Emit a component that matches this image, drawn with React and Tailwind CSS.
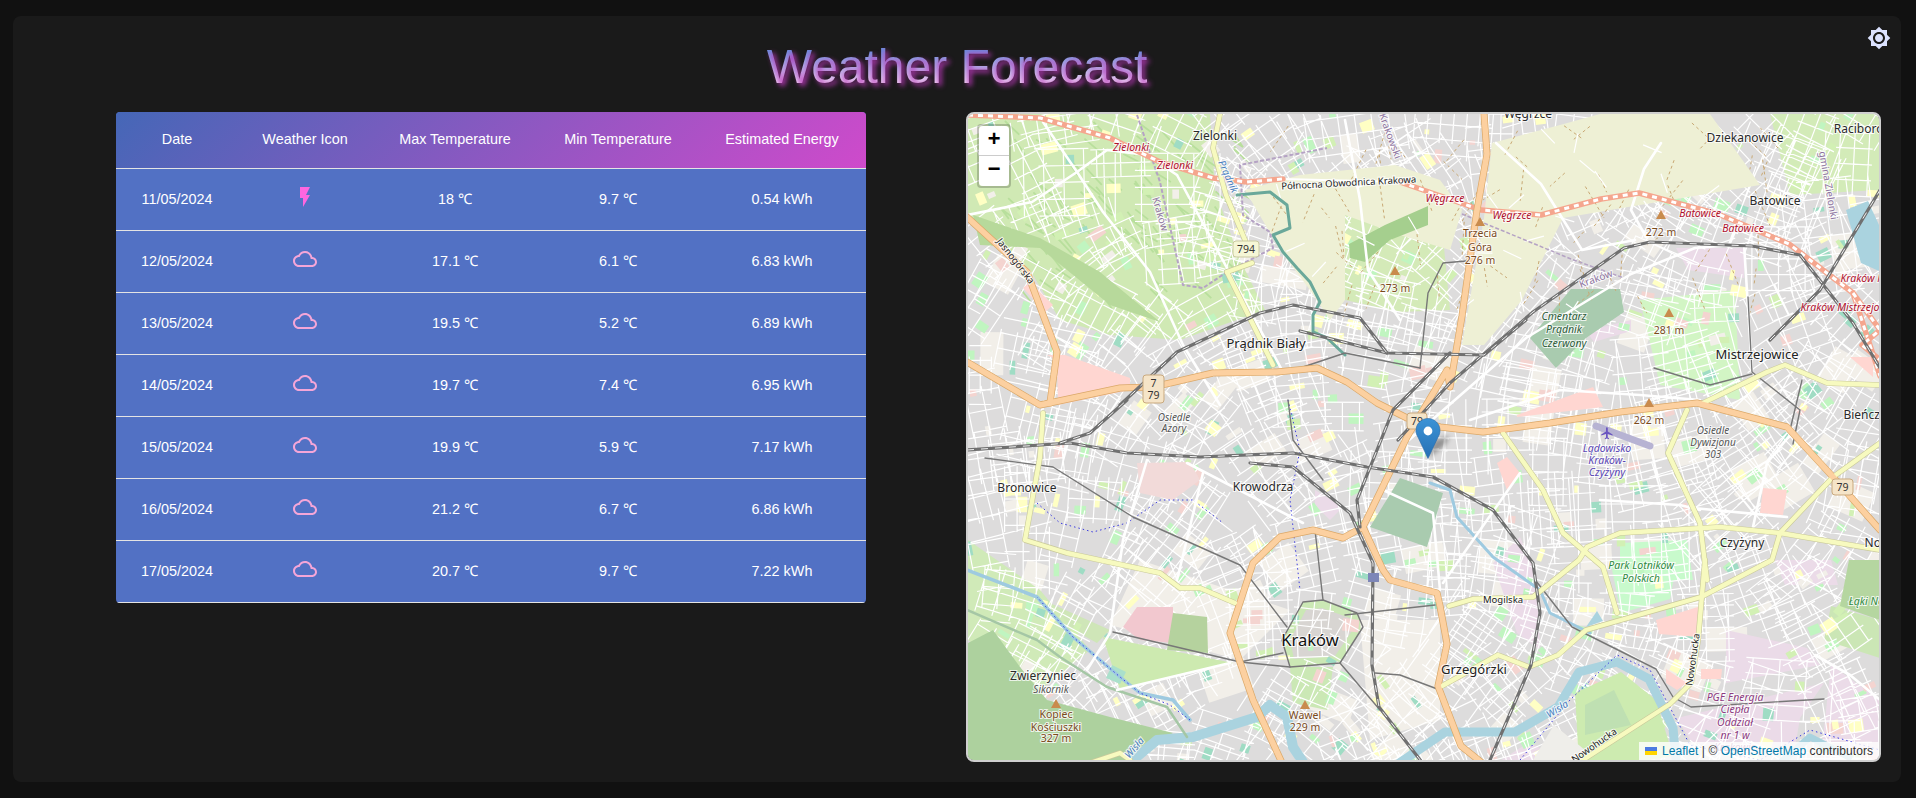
import React from "react";

const rows = [
  ["11/05/2024", "bolt", "18 ℃", "9.7 ℃", "0.54 kWh"],
  ["12/05/2024", "cloud", "17.1 ℃", "6.1 ℃", "6.83 kWh"],
  ["13/05/2024", "cloud", "19.5 ℃", "5.2 ℃", "6.89 kWh"],
  ["14/05/2024", "cloud", "19.7 ℃", "7.4 ℃", "6.95 kWh"],
  ["15/05/2024", "cloud", "19.9 ℃", "5.9 ℃", "7.17 kWh"],
  ["16/05/2024", "cloud", "21.2 ℃", "6.7 ℃", "6.86 kWh"],
  ["17/05/2024", "cloud", "20.7 ℃", "9.7 ℃", "7.22 kWh"],
];

function WeatherIcon({ type }) {
  if (type === "bolt") {
    return (
      <svg viewBox="0 0 24 24" className="inline-block w-6 h-6 align-middle fill-[#ff66e0]">
        <path d="M7 2v11h3v9l7-12h-4l4-8z" />
      </svg>
    );
  }
  return (
    <svg viewBox="0 0 24 24" className="inline-block w-6 h-6 align-middle fill-[#f5a6d8]">
      <path d="M12 6c2.62 0 4.88 1.86 5.39 4.43l.3 1.5 1.53.11c1.56.1 2.78 1.41 2.78 2.96 0 1.65-1.35 3-3 3H6c-2.21 0-4-1.79-4-4 0-2.05 1.53-3.76 3.56-3.97l1.07-.11.5-.95C8.08 7.14 9.94 6 12 6m0-2C9.11 4 6.6 5.64 5.35 8.04 2.34 8.36 0 10.91 0 14c0 3.31 2.69 6 6 6h13c2.76 0 5-2.24 5-5 0-2.64-2.05-4.78-4.65-4.96C18.67 6.59 15.64 4 12 4z" />
    </svg>
  );
}

// map data, all in page pixels (the svg viewBox starts at the map's corner)
// these lie under the street mesh
const softAreas = [
  ["#d0e9b4", "968,114 1210,114 1215,190 1240,260 1265,310 1180,340 1110,335 1060,320 1030,270 968,215"],
  ["#d4eab8", "1345,195 1440,205 1450,310 1400,312 1345,300"],
  ["#d3ebb8", "1770,114 1880,114 1880,190 1790,195"],
  ["#ebdbe8", "1676,248 1744,248 1744,278 1688,270"],
  ["#ebdbe8", "1586,331 1631,320 1631,331 1594,342"],
  ["#ebdbe8", "1493,563 1520,537 1537,577 1540,650 1517,633"],
  ["#ebdbe8", "1677,718 1824,683 1800,718 1796,742 1747,753 1691,742"],
  ["#ebdbe8", "1726,630 1807,648 1820,665 1726,683"],
  ["#ebdbe8", "1831,665 1880,700 1880,765 1820,765"],
  ["#ebdbe8", "1494,765 1529,742 1568,765"],
  ["#ebdbe8", "1775,560 1831,560 1838,585 1785,585"],
  ["#ebdbe8", "1315,490 1343,507 1330,520 1315,505"],
  ["#c8facc", "1610,560 1677,560 1670,599 1621,613"],
  ["#c8facc", "1620,543 1687,540 1693,580 1620,580"],
  ["#d2f5c4", "1640,300 1735,290 1740,400 1660,385"],
  ["#cfe6b8", "1043,600 1110,630 1097,643 1050,617"],
  ["#cbe8b5", "1290,667 1333,667 1327,710 1293,703"],
  ["#cbe8b5", "1303,602 1323,600 1357,613 1363,627 1340,663 1290,667 1282,640"],
  ["#d8d5d2", "1306,610 1322,608 1350,618 1354,628 1335,656 1294,659 1290,640"],
  ["#cbe6b5", "1831,606 1880,620 1880,658 1824,640"],
  ["#d0eab8", "968,540 1040,590 1090,650 1040,690 968,640"],
  ["#f2efe9", "1140,560 1290,610 1240,660 1110,625"],
  ["#f2efe9", "1360,620 1440,620 1440,720 1370,740"],
];

// these cover the mesh
const solidAreas = [
  ["#b7d99b", "973,215 1040,238 1100,272 1160,322 1110,305 1040,248 980,245"],
  ["#eef0d5", "1245,190 1300,175 1395,165 1440,180 1462,210 1450,250 1400,235 1345,215 1345,300 1330,320 1310,290 1280,250"],
  ["#eef0d5", "1492,143 1560,125 1600,114 1710,114 1760,185 1700,195 1640,205 1563,218 1522,300 1484,345 1462,345 1484,218"],
  ["#a5cf8e", "1349,244 1385,225 1428,206 1428,225 1390,240 1365,262 1350,258"],
  ["#a9cbaf", "1370,527 1400,478 1443,493 1427,547"],
  ["#a9cbaf", "1530,338 1571,289 1620,289 1624,312 1586,338 1556,368"],
  ["#ffd6d1", "1047,355 1065,355 1130,378 1130,390 1058,405 1057,360"],
  ["#ffd6d1", "1030,282 1053,305 1045,312 1023,288"],
  ["#f2dad9", "1137,463 1190,462 1200,480 1173,500 1140,493"],
  ["#f2c8cf", "1123,627 1137,607 1173,607 1173,643 1140,640"],
  ["#ffd6d1", "1497,463 1507,457 1520,473 1507,490"],
  ["#ffd6d1", "1517,415 1593,387 1603,407 1517,417"],
  ["#ffd6d1", "1656,620 1701,606 1698,637 1659,634"],
  ["#ffd6d1", "1701,669 1722,669 1721,679 1701,679"],
  ["#ffd6d1", "1666,669 1687,683 1677,690 1666,683"],
  ["#ffd6d1", "1763,488 1787,490 1783,515 1760,513"],
  ["#ffd6d1", "1850,357 1873,357 1873,377"],
  ["#cdeab0", "1103,637 1233,663 1120,690"],
  ["#b5d29e", "1173,613 1207,617 1208,653 1167,650"],
  ["#add19e", "968,643 993,630 1020,667 1047,700 1110,717 1173,733 1127,760 968,760"],
  ["#cdebb0", "1575,693 1621,672 1656,700 1673,756 1621,765 1579,765"],
  ["#bfe0b2", "1585,705 1614,690 1631,725 1585,735"],
  ["#efeeea", "1554,725 1585,750 1567,765 1530,765"],
  ["#b5d6a0", "1849,560 1880,560 1880,620 1840,606"],
  ["#aad3df", "1846,210 1868,201 1879,225 1879,271 1861,263"],
  ["#aad3df", "1597,611 1603,621 1586,627"],
  ["#aae0cb", "1112,665 1126,672 1120,684 1106,678"],
];

const whiteWays = [
  "967,215 1032,202 1077,172 1107,150 1147,155 1177,175",
  "1043,122 1077,172 1103,212 1150,272 1183,345 1220,405",
  "1177,175 1227,268 1283,372",
  "1496,143 1541,184 1582,250 1635,240",
  "1661,143 1644,169 1631,210 1646,237",
  "1409,440 1526,338 1631,274 1695,248 1744,244",
  "1693,508 1787,517",
  "1753,527 1767,463 1790,435",
  "1383,490 1433,513 1440,590",
  "1443,583 1520,473",
  "1117,690 1230,663",
  "1087,670 1110,633 1123,540 1147,460",
  "1203,473 1177,580",
  "1187,463 1303,523",
  "1345,120 1360,200 1368,270 1400,320",
  "1470,420 1560,390 1640,395 1700,400",
  "1744,244 1752,370",
  "1815,655 1850,675 1880,700",
  "1600,500 1680,505 1700,510",
];

const grayWays = [
  "1748,297 1752,372 1800,410 1793,444",
  "1420,368 1428,293 1443,263 1466,261",
  "1300,368 1345,353 1420,368",
  "1654,368 1710,385 1752,374",
  "1802,380 1790,430",
  "1536,581 1572,627 1614,648 1656,669 1673,697 1691,707 1824,699",
  "985,458 1053,467 1133,517 1240,565 1287,627",
  "1288,400 1293,440 1323,480",
  "1303,602 1323,600 1357,613 1363,627 1340,663 1290,667 1282,640 1303,602",
  "1113,632 1240,662 1283,653",
  "1340,663 1380,710",
  "1323,600 1315,530",
  "1290,667 1240,662",
  "1375,673 1400,675 1440,690",
  "1345,615 1435,605",
];

const orangeWays = [
  "967,217 1027,272 1057,352 1050,403",
  "967,362 1040,405 1120,388 1153,387 1213,373 1277,372 1317,368 1347,382 1377,403 1407,418 1440,427 1483,432 1550,423 1620,412 1697,403 1787,427 1833,477 1880,530",
  "1484,114 1487,154 1477,210 1462,316 1450,387 1447,370 1407,437 1363,527 1343,538 1313,530 1280,537 1253,563 1230,633 1253,700 1283,765",
  "1363,527 1383,570 1390,580 1437,593 1440,606 1447,644 1438,686 1461,746 1491,770",
];

const yellowWays = [
  "1220,114 1213,148 1226,195 1245,240",
  "1227,272 1273,365",
  "1227,272 1252,263",
  "1043,413 1040,457 1025,540 1067,553 1160,573 1180,588 1200,588 1235,603",
  "1503,433 1543,490 1563,533 1603,567 1617,613",
  "1449,606 1473,599 1533,597 1579,560 1587,547 1620,533 1720,527 1780,533 1880,550",
  "1442,686 1498,655 1529,667 1558,655 1586,630 1701,597 1772,560 1780,533 1833,477 1880,443",
  "1705,560 1698,641 1691,683 1670,704 1572,767",
  "1687,410 1668,453 1700,523 1707,580",
  "1703,403 1767,372 1785,365 1827,383 1880,385",
  "1093,762 1120,753 1130,760",
];

const rails = [
  "967,450 1070,443 1127,453 1200,457 1293,453 1367,467 1433,477 1493,510 1533,563 1540,613 1531,665 1487,767",
  "1250,463 1293,467 1350,513 1373,563 1372,665 1379,707 1428,770",
  "1398,440 1450,383 1533,312 1624,248 1650,242 1752,246 1800,255 1853,323 1880,368",
  "1450,353 1393,410 1357,500 1360,527",
  "1300,331 1387,353 1484,355 1526,320",
  "1120,405 1177,352 1260,313 1293,305 1360,318 1387,353",
  "1060,443 1090,433 1127,400",
  "1770,340 1820,290 1880,190",
];

const labels = [
  ["Zielonki", 1215, 140, "town"],
  ["Zielonki", 1131, 151, "red"],
  ["Zielonki", 1175, 169, "red"],
  ["Północna Obwodnica Krakowa", 1349, 186, "road", -3],
  ["Prądnik", 1225, 178, "river", 66],
  ["Kraków", 1157, 215, "admin", 74],
  ["Jasnogórska", 1013, 263, "road", 52],
  ["Prądnik Biały", 1266, 348, "big"],
  ["Węgrzce", 1528, 118, "town"],
  ["Dziekanowice", 1745, 142, "town"],
  ["Raciborowice", 1871, 133, "town"],
  ["Batowice", 1775, 205, "town"],
  ["Batowice", 1700, 217, "red"],
  ["Batowice", 1743, 232, "red"],
  ["Węgrzce", 1445, 202, "red"],
  ["Węgrzce", 1512, 219, "red"],
  ["Trzecia", 1480, 237, "peak"],
  ["Góra", 1480, 251, "peak"],
  ["276 m", 1480, 264, "peak"],
  ["273 m", 1395, 292, "peak"],
  ["272 m", 1661, 236, "peak"],
  ["281 m", 1669, 334, "peak"],
  ["262 m", 1649, 424, "peak"],
  ["Cmentarz", 1564, 320, "cemetery"],
  ["Prądnik", 1564, 333, "cemetery"],
  ["Czerwony", 1564, 347, "cemetery"],
  ["Kraków", 1597, 282, "admin", -20],
  ["gmina Zielonki", 1825, 186, "admin", 80],
  ["Krakowski", 1387, 137, "admin", 70],
  ["Kraków Mistrzejowice", 1890, 282, "red"],
  ["Kraków Mistrzejowice", 1850, 311, "red"],
  ["Mistrzejowice", 1757, 359, "big"],
  ["Osiedle", 1174, 421, "gray"],
  ["Azory", 1174, 432, "gray"],
  ["Bronowice", 1027, 492, "town"],
  ["Krowodrza", 1263, 491, "town"],
  ["Kraków", 1310, 646, "city"],
  ["Zwierzyniec", 1043, 680, "town"],
  ["Sikornik", 1051, 693, "gray"],
  ["Kopiec", 1056, 718, "peak"],
  ["Kościuszki", 1056, 731, "peak"],
  ["327 m", 1056, 742, "peak"],
  ["Wawel", 1305, 719, "peak"],
  ["229 m", 1305, 731, "peak"],
  ["Lądowisko", 1607, 452, "air"],
  ["Kraków-", 1607, 464, "air"],
  ["Czyżyny", 1607, 476, "air"],
  ["Osiedle", 1713, 434, "gray"],
  ["Dywizjonu", 1713, 446, "gray"],
  ["303", 1713, 458, "gray"],
  ["Bieńczyce", 1871, 419, "town"],
  ["Czyżyny", 1742, 547, "town"],
  ["Nowa Huta", 1896, 547, "town"],
  ["Park Lotników", 1641, 569, "park"],
  ["Polskich", 1641, 582, "park"],
  ["Mogilska", 1503, 603, "road"],
  ["Grzegórzki", 1474, 674, "big"],
  ["Wisła", 1559, 712, "river", -32],
  ["Wisła", 1137, 750, "river", -50],
  ["Nowohucka", 1696, 660, "road", -82],
  ["Nowohucka", 1596, 748, "road", -35],
  ["Łąki Nowohuckie", 1888, 605, "park"],
  ["PGE Energia", 1735, 701, "plant"],
  ["Ciepła", 1735, 713, "plant"],
  ["Oddział", 1735, 726, "plant"],
  ["nr 1 w", 1735, 739, "plant"],
  ["Krakowie", 1735, 751, "plant"],
];

const labelStyle = {
  town: { fontSize: 12, fill: "#2a2a2a" },
  big: { fontSize: 13, fill: "#222" },
  city: { fontSize: 16.5, fill: "#111" },
  red: { fontSize: 10.5, fill: "#b0102e", fontStyle: "italic" },
  road: { fontSize: 9.5, fill: "#222" },
  river: { fontSize: 10, fill: "#4a7fc0", fontStyle: "italic" },
  admin: { fontSize: 10, fill: "#8d739f" },
  peak: { fontSize: 10.5, fill: "#7a4a1c" },
  cemetery: { fontSize: 10.5, fill: "#2d5c3a", fontStyle: "italic" },
  gray: { fontSize: 10, fill: "#555", fontStyle: "italic" },
  air: { fontSize: 10.5, fill: "#5a46b4", fontStyle: "italic" },
  park: { fontSize: 10.5, fill: "#2f8a3f", fontStyle: "italic" },
  plant: { fontSize: 10.5, fill: "#8c3b80", fontStyle: "italic" },
};

const peaks = [
  [1480, 222], [1395, 271], [1661, 215], [1669, 313], [1649, 403], [1056, 704], [1305, 705],
];

const shields = [
  [1233, 241, 26, 16, ["794"], "#f5f6d6", "#c9c9a0"],
  [1143, 375, 21, 28, ["7", "79"], "#f5e4c8", "#c9a97e"],
  [1407, 413, 20, 16, ["79"], "#f5e4c8", "#c9a97e"],
  [1832, 479, 21, 16, ["79"], "#f5e4c8", "#c9a97e"],
];

// seeded so the street mesh is the same on every render
function buildMesh() {
  let seed = 11;
  const rnd = () => {
    seed = (seed * 16807) % 2147483647;
    return seed / 2147483647;
  };
  const n = (v) => v.toFixed(1);
  let streets = "";
  const parcels = [];
  const beige = [];
  const tints = ["#ffffc4", "#ffffc4", "#c0f5c0", "#c0f5c0", "#d2f0b4", "#9fdcc4", "#f2efe9", "#f4d4d0"];

  // neighbourhoods: small rotated street grids
  for (let ax = 968; ax < 1880; ax += 46) {
    for (let ay = 114; ay < 762; ay += 46) {
      const cx = ax + rnd() * 36;
      const cy = ay + rnd() * 36;
      const a = Math.sin(cx / 190) * 0.9 + Math.cos(cy / 150) * 0.9 + (rnd() - 0.5) * 0.5;
      const ux = Math.cos(a), uy = Math.sin(a);
      const vx = -uy, vy = ux;
      const gap = 11 + rnd() * 8;
      const long = 18 + rnd() * 18;
      const count = 1 + Math.floor(rnd() * 2.5);
      for (let i = -count; i <= count; i++) {
        const ox = cx + vx * i * gap, oy = cy + vy * i * gap;
        streets += `M${n(ox - ux * long)} ${n(oy - uy * long)}L${n(ox + ux * long)} ${n(oy + uy * long)}`;
      }
      const cross = 1 + Math.floor(rnd() * 2);
      for (let i = -cross; i <= cross; i++) {
        const ox = cx + ux * i * long * 0.8, oy = cy + uy * i * long * 0.8;
        const h = count * gap;
        streets += `M${n(ox - vx * h)} ${n(oy - vy * h)}L${n(ox + vx * h)} ${n(oy + vy * h)}`;
      }
      if (rnd() < 0.3) {
        beige.push({ x: cx, y: cy, w: 22 + rnd() * 26, h: 16 + rnd() * 22, r: (a * 180) / Math.PI });
      }
      for (let k = 0; k < 3; k++) {
        if (rnd() < 0.75) {
          parcels.push({
            x: cx + (rnd() - 0.5) * 60,
            y: cy + (rnd() - 0.5) * 60,
            w: 4 + rnd() * 13,
            h: 4 + rnd() * 9,
            c: tints[Math.floor(rnd() * tints.length)],
            r: (a * 180) / Math.PI,
          });
        }
      }
    }
  }

  let strips = "";
  for (let i = 0; i < 110; i++) {
    const px = 1000 + rnd() * 240;
    const py = 118 + rnd() * 180;
    strips += `M${n(px)} ${n(py)}l${n(8 + rnd() * 12)} ${n(9 + rnd() * 8)}`;
  }
  let tracks = "";
  for (let i = 0; i < 70; i++) {
    const px = 1270 + rnd() * 500;
    const py = 120 + rnd() * 180;
    tracks += `M${n(px)} ${n(py)}l${n(rnd() * 40 - 20)} ${n(10 + rnd() * 25)}`;
  }
  let lanes = "";
  for (let i = 0; i < 45; i++) {
    const px = 1270 + rnd() * 470;
    const py = 118 + rnd() * 190;
    const a = rnd() * 3;
    lanes += `M${n(px)} ${n(py)}l${n(Math.cos(a) * 20)} ${n(Math.sin(a) * 20)}`;
  }
  return { streets, parcels, beige, strips, tracks, lanes };
}
const mesh = buildMesh();

function Line({ points, color, width, dash, opacity }) {
  return (
    <polyline
      points={points}
      fill="none"
      stroke={color}
      strokeWidth={width}
      strokeDasharray={dash}
      strokeOpacity={opacity}
      strokeLinejoin="round"
      strokeLinecap={dash ? "butt" : "round"}
    />
  );
}

function MapDrawing() {
  return (
    <svg viewBox="968 114 911 646" className="block w-full h-full font-['Noto_Sans',sans-serif]">
      <defs>
        <linearGradient id="pin" x1="0" y1="0" x2="0" y2="1">
          <stop offset="0" stopColor="#3c93d6" />
          <stop offset="1" stopColor="#2670b4" />
        </linearGradient>
        <filter id="pinShadow"><feGaussianBlur stdDeviation="2.5" /></filter>
      </defs>
      <rect x="968" y="114" width="911" height="646" fill="#dddcdc" />
      {mesh.beige.map((p, i) => (
        <rect key={i} x={p.x} y={p.y} width={p.w} height={p.h} fill="#f2efe9" transform={`rotate(${p.r} ${p.x} ${p.y})`} />
      ))}
      {softAreas.map(([fill, points], i) => (
        <polygon key={i} points={points} fill={fill} />
      ))}
      <path d={mesh.strips} stroke="#b8df9c" strokeWidth="1.8" fill="none" />
      {mesh.parcels.map((p, i) => (
        <rect key={i} x={p.x} y={p.y} width={p.w} height={p.h} fill={p.c} transform={`rotate(${p.r} ${p.x} ${p.y})`} />
      ))}
      <path d={mesh.streets} stroke="#fff" strokeWidth="1.2" fill="none" />
      {solidAreas.map(([fill, points], i) => (
        <polygon key={i} points={points} fill={fill} />
      ))}
      <path d={mesh.tracks} stroke="#c8a874" strokeWidth="1" strokeDasharray="3 3" fill="none" />
      <path d={mesh.lanes} stroke="#fff" strokeWidth="1.2" fill="none" />

      {/* rivers */}
      <Line points="1133,760 1157,740 1193,737 1257,717 1270,705 1287,717 1293,747 1303,762" color="#aad3df" width="10" />
      <Line points="1389,770 1445,732 1515,732 1558,707 1579,672 1617,662 1649,679 1673,728 1677,770" color="#aad3df" width="9" />
      <Line points="1772,770 1810,737 1849,757" color="#aad3df" width="7" />
      <Line points="967,570 1037,597 1073,637 1120,677 1140,693 1173,700 1190,720" color="#9ecae0" width="3.5" />
      <Line points="967,610 1037,640 1060,657 1107,687 1167,707 1187,737" color="#a5c7a5" width="2.5" />
      <Line points="1237,195 1270,192 1287,205 1290,228 1273,235 1283,252 1297,268 1310,282 1320,302 1313,315 1313,332 1327,338 1345,355" color="#6aa89a" width="3" />
      <Line points="1430,483 1450,490 1457,517 1493,557 1540,590 1550,613 1590,633" color="#9ecae0" width="3" />

      {/* boundaries */}
      <Line points="1137,115 1160,182 1183,285 1203,288 1227,272 1273,248 1270,232 1243,215 1240,165 1327,148" color="#b5a3c4" width="2" dash="4 2" />
      <Line points="1462,214 1571,259 1624,278" color="#b5a3c4" width="1.5" dash="4 2" />
      <Line points="1037,503 1060,523 1093,532 1127,523 1160,500 1193,500 1223,523" color="#3a3ae0" width="1" dash="1.5 3" />
      <Line points="1190,720 1170,705 1140,693 1120,677 1073,637 1037,597" color="#3a3ae0" width="1" dash="1.5 3" />
      <Line points="1520,760 1570,700 1617,655 1650,670 1690,745 1760,760 1810,730 1880,750" color="#3a3ae0" width="1" dash="1.5 3" />
      <Line points="1288,400 1300,450 1290,500 1300,590" color="#3a3ae0" width="1" dash="1.5 3" />

      {whiteWays.map((p, i) => <Line key={i} points={p} color="#fff" width="2.6" />)}
      {grayWays.map((p, i) => <Line key={i} points={p} color="#777" width="1.4" />)}

      {/* planned bypass */}
      <Line points="1283,179 1400,182" color="#fff" width="2" />
      {["968,115 1040,118 1110,138 1160,162 1213,178 1247,182 1283,179", "1400,182 1481,210 1541,215 1601,199 1639,193 1718,214 1789,244 1853,293 1880,376", "1853,293 1880,330 1862,345 1880,360"].map((p, i) => (
        <g key={i}>
          <Line points={p} color="#f5a68e" width="5.5" />
          <Line points={p} color="#fff" width="3" dash="5 5" />
        </g>
      ))}

      {yellowWays.map((p, i) => <Line key={i} points={p} color="#c9c99a" width="5.6" />)}
      {orangeWays.map((p, i) => <Line key={i} points={p} color="#dba868" width="7" />)}
      {yellowWays.map((p, i) => <Line key={i} points={p} color="#f7fabf" width="4.4" />)}
      {orangeWays.map((p, i) => <Line key={i} points={p} color="#fcd0a0" width="5.6" />)}

      {rails.map((p, i) => (
        <g key={i}>
          <Line points={p} color="#707070" width="3.2" />
          <Line points={p} color="#fff" width="0.9" dash="7 7" />
        </g>
      ))}

      {/* runway, station */}
      <Line points="1596,426 1650,446" color="#b7b3d3" width="7" />
      <rect x="1368" y="573" width="11" height="9" fill="#7d86b8" />

      {peaks.map(([x, y], i) => (
        <polygon key={i} points={`${x},${y - 5} ${x + 5},${y + 4} ${x - 5},${y + 4}`} fill="#c98b4d" />
      ))}

      <path
        transform="translate(1600 426) scale(0.6)"
        fill="#6a55c0"
        d="M21 16v-2l-8-5V3.5c0-.83-.67-1.5-1.5-1.5S10 2.67 10 3.5V9l-8 5v2l8-2.5V19l-2 1.5V22l3.5-1 3.5 1v-1.5L13 19v-5.5l8 2.5z"
      />

      {labels.map(([text, x, y, kind, rot], i) => (
        <text
          key={i}
          x={x}
          y={y}
          textAnchor="middle"
          {...labelStyle[kind]}
          stroke="#fff"
          strokeOpacity="0.75"
          strokeWidth="2.2"
          paintOrder="stroke"
          transform={rot ? `rotate(${rot} ${x} ${y})` : undefined}
        >
          {text}
        </text>
      ))}

      {shields.map(([x, y, w, h, lines, fill, stroke], i) => (
        <g key={i}>
          <rect x={x} y={y} width={w} height={h} rx="3" fill={fill} stroke={stroke} />
          {lines.map((t, j) => (
            <text key={j} x={x + w / 2} y={y + 12 + j * 12} textAnchor="middle" fontSize="10.5" fill="#333">{t}</text>
          ))}
        </g>
      ))}

      {/* marker */}
      <polygon points="1428,458 1434,440 1450,436 1444,446" fill="#000" fillOpacity="0.35" filter="url(#pinShadow)" />
      <path
        transform="translate(1415.5 418)"
        d="M12.5.5C5.8.5.5 5.9.5 12.5c0 2.4.7 4.6 1.9 6.5l10.1 21.5L22.6 19c1.2-1.9 1.9-4.1 1.9-6.5C24.5 5.9 19.2.5 12.5.5z"
        fill="url(#pin)"
        stroke="#2a6aa8"
        strokeWidth="0.6"
      />
      <circle cx="1428" cy="431" r="4.4" fill="#fff" />
    </svg>
  );
}

function WeatherMap() {
  return (
    <div className="relative w-[915px] h-[650px] rounded-lg overflow-hidden border-2 border-[#cfcfcf]">
      <MapDrawing />
      <div className="absolute left-[9px] top-[10px] w-[34px] rounded border-2 border-black/20 bg-clip-padding font-['Liberation_Mono',monospace] font-bold text-black">
        <div className="h-[30px] bg-white rounded-t-sm border-b border-[#ccc] flex items-center justify-center text-[22px] leading-none">+</div>
        <div className="h-[30px] bg-white rounded-b-sm flex items-center justify-center text-[22px] leading-none">−</div>
      </div>
      <div className="absolute right-0 bottom-0 h-[18px] px-[6px] bg-white/80 flex items-center gap-[5px] text-[12px] tracking-[0.06px] text-[#333] font-['Liberation_Sans',Arial,sans-serif]">
        <svg viewBox="0 0 12 8" className="w-3 h-2">
          <rect width="12" height="4" fill="#4C7BE1" />
          <rect y="4" width="12" height="4" fill="#FFD500" />
        </svg>
        <span><span className="text-[#0078a8]">Leaflet</span> | © <span className="text-[#0078a8]">OpenStreetMap</span> contributors</span>
      </div>
    </div>
  );
}

export default function App() {
  return (
    <div className="min-h-screen bg-[#111111] pt-4 pb-4 pl-[13px] pr-[15px] font-['Liberation_Sans',Arial,sans-serif]">
      <div className="relative h-[766px] rounded-lg bg-[#1a1a1a]">
        <svg viewBox="0 0 24 24" className="absolute right-[10px] top-[10px] w-6 h-6 fill-[#dbe2ff]">
          <path d="M20 8.69V4h-4.69L12 .69 8.69 4H4v4.69L.69 12 4 15.31V20h4.69L12 23.31 15.31 20H20v-4.69L23.31 12 20 8.69zM12 18c-3.31 0-6-2.69-6-6s2.69-6 6-6 6 2.69 6 6-2.69 6-6 6zm0-10c-2.21 0-4 1.79-4 4s1.79 4 4 4 4-1.79 4-4-1.79-4-4-4z" />
        </svg>

        {/* Title */}
        <div className="h-[96px] pt-[23px] text-center">
          <h1 className="inline-block text-[48px] leading-[55px] text-transparent bg-clip-text bg-[linear-gradient(180deg,#6f8ada_22%,#f0d8f6_80%)] [text-shadow:3px_3px_5px_rgba(185,55,185,0.85)]">
            Weather Forecast
          </h1>
        </div>

        <div className="flex items-start gap-[100px] pl-[103px]">
          {/* Forecast table */}
          <div className="w-[750px] rounded overflow-hidden bg-[#5271c4] text-white text-[14.4px]">
            <table className="w-full table-fixed border-separate border-spacing-0">
              <thead className="bg-[linear-gradient(135deg,#4567b7,#cf4acb)]">
                <tr className="h-[57px] [&>th]:border-b [&>th]:border-[#e4e4e4] [&>th]:font-normal">
                  <th className="w-[122px]">Date</th>
                  <th className="w-[134px]">Weather Icon</th>
                  <th className="w-[166px]">Max Temperature</th>
                  <th className="w-[160px]">Min Temperature</th>
                  <th className="w-[168px]">Estimated Energy</th>
                </tr>
              </thead>
              <tbody>
                {rows.map((row) => (
                  <tr key={row[0]} className="h-[62px] text-center [&>td]:border-b [&>td]:border-[#e4e4e4]">
                    <td>{row[0]}</td>
                    <td><span className="relative -top-[3px]"><WeatherIcon type={row[1]} /></span></td>
                    <td>{row[2]}</td>
                    <td>{row[3]}</td>
                    <td>{row[4]}</td>
                  </tr>
                ))}
              </tbody>
            </table>
          </div>

          <WeatherMap />
        </div>
      </div>
    </div>
  );
}
